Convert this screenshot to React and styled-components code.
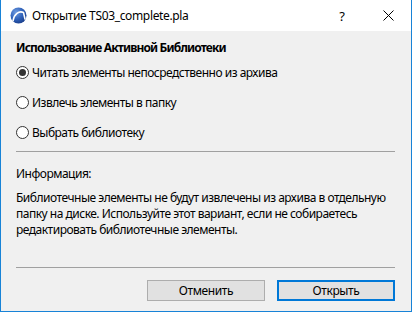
import React from "react";
import styled, { createGlobalStyle } from "styled-components";

const Global = createGlobalStyle`
  html, body { margin: 0; padding: 0; background: #f0f0f0; }
  * { box-sizing: border-box; }
`;

const Window = styled.div`
  width: 412px;
  height: 312px;
  display: flex;
  flex-direction: column;
  background: #f0f0f0;
  border: 1px solid #1883d7;
  border-top: none;
  font-family: "Noto Sans", "Open Sans", sans-serif;
  font-size: 12px;
  color: #000;
  overflow: hidden;
`;

const TitleBar = styled.div`
  height: 31px;
  flex: none;
  background: #fff;
  display: flex;
  align-items: center;
  padding-left: 9px;
`;

const Title = styled.div`
  margin-left: 5px;
  font-size: 12px;
  letter-spacing: -0.35px;
  flex: 1;
`;

const TitleButton = styled.div`
  width: 46px;
  height: 31px;
  display: flex;
  align-items: center;
  justify-content: center;
  font-size: 13px;
`;

const Body = styled.div`
  flex: 1;
  display: flex;
  flex-direction: column;
  padding: 0 16px 10px 15px;
`;

const Heading = styled.div`
  font-weight: bold;
  margin-top: 9px;
  letter-spacing: -0.85px;
  height: 16px;
  line-height: 16px;
`;

const Options = styled.div`
  display: flex;
  flex-direction: column;
  gap: 14px;
  margin-top: 8px;
`;

const Option = styled.label`
  display: flex;
  align-items: center;
  gap: 3px;
  height: 16px;
  letter-spacing: -0.5px;
`;

const Radio = styled.span`
  width: 13px;
  height: 13px;
  border-radius: 50%;
  border: 1px solid #333;
  background: #fff;
  display: flex;
  align-items: center;
  justify-content: center;
  flex: none;
  &::after {
    content: "";
    width: 7px;
    height: 7px;
    border-radius: 50%;
    background: ${(p) => (p.$on ? "#333" : "transparent")};
  }
`;

const Rule = styled.div`
  height: 1px;
  background: #a0a0a0;
  margin-top: ${(p) => p.$top}px;
`;

const Info = styled.div`
  margin-top: 14px;
  line-height: 16px;
  letter-spacing: -0.5px;
`;

const Text = styled.p`
  margin: 8px 0 0 0;
  line-height: 16px;
  letter-spacing: -0.5px;
`;

const Spacer = styled.div`
  flex: 1;
`;

const Buttons = styled.div`
  display: flex;
  justify-content: flex-end;
  gap: 12px;
  margin-top: 12px;
`;

const Button = styled.button`
  width: 118px;
  height: 21px;
  padding: 0;
  font-family: inherit;
  font-size: 12px;
  letter-spacing: -0.4px;
  color: #000;
  background: #e1e1e1;
  border: ${(p) => (p.$primary ? "2px solid #0078d7" : "1px solid #adadad")};
`;

function Logo() {
  return (
    <svg width="17" height="17" viewBox="0 0 17 17">
      <defs>
        <radialGradient id="lg" cx="35%" cy="30%" r="75%">
          <stop offset="0" stopColor="#6f9be0" />
          <stop offset="0.6" stopColor="#2d5fb8" />
          <stop offset="1" stopColor="#1b3f8c" />
        </radialGradient>
      </defs>
      <circle cx="8.5" cy="8.5" r="8" fill="url(#lg)" />
      <path d="M3 14 C4 7 9 3.5 13.5 5.5 L15 12" fill="none" stroke="#fff" strokeWidth="1.6" strokeLinecap="round" />
    </svg>
  );
}

export default function App() {
  return (
    <>
      <Global />
      <Window>
        <TitleBar>
          <Logo />
          <Title>Открытие TS03_complete.pla</Title>
          <TitleButton>?</TitleButton>
          <TitleButton>
            <svg width="11" height="11" viewBox="0 0 11 11">
              <path d="M0.5 0.5 L10.5 10.5 M10.5 0.5 L0.5 10.5" stroke="#000" strokeWidth="1" />
            </svg>
          </TitleButton>
        </TitleBar>
        <Body>
          <Heading>Использование Активной Библиотеки</Heading>
          <Options>
            <Option><Radio $on />Читать элементы непосредственно из архива</Option>
            <Option><Radio />Извлечь элементы в папку</Option>
            <Option><Radio />Выбрать библиотеку</Option>
          </Options>
          <Rule $top={11} />
          <Info>Информация:</Info>
          <Text>
            Библиотечные элементы не будут извлечены из архива в отдельную папку на диске.
            Используйте этот вариант, если не собираетесь редактировать библиотечные элементы.
          </Text>
          <Spacer />
          <Rule $top={0} />
          <Buttons>
            <Button>Отменить</Button>
            <Button $primary>Открыть</Button>
          </Buttons>
        </Body>
      </Window>
    </>
  );
}
